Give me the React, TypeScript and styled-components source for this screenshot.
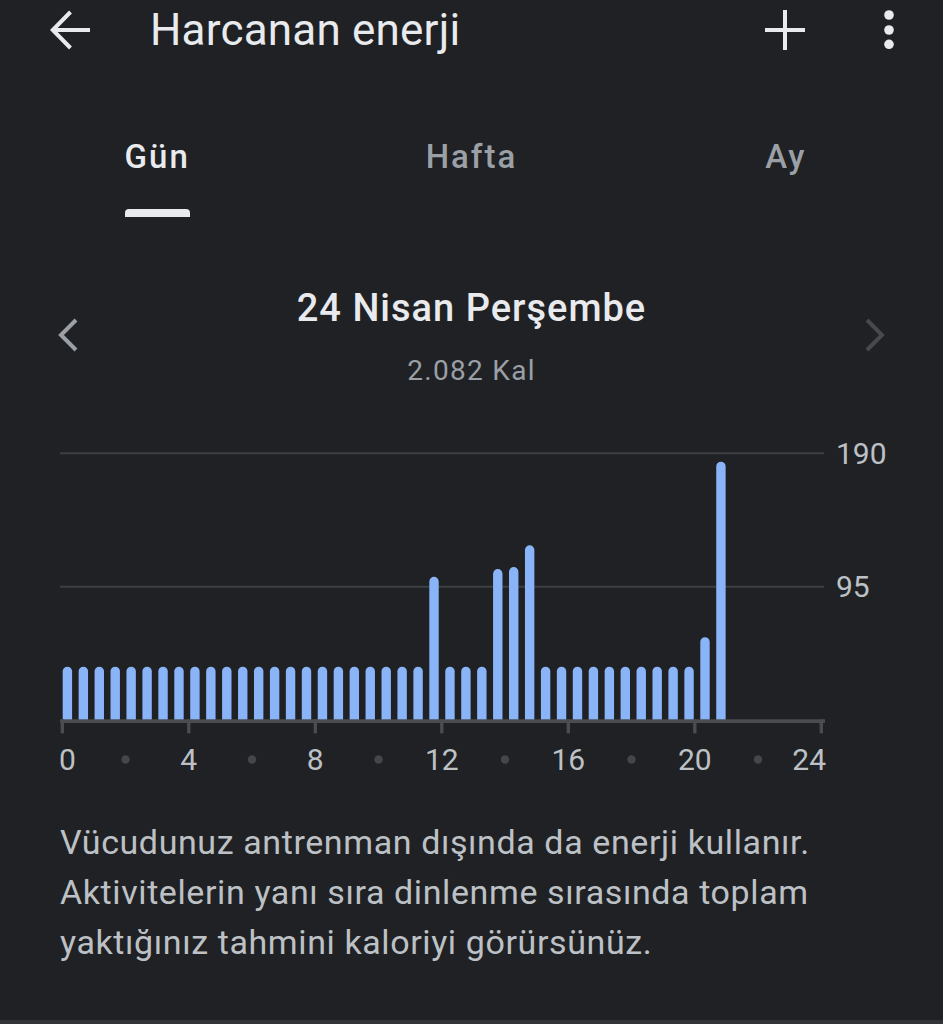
import React from "react";
import styled, { createGlobalStyle } from "styled-components";

const GlobalStyle = createGlobalStyle`
  html, body {
    margin: 0;
    padding: 0;
    background: #202124;
  }
  body {
    font-family: Roboto, "Noto Sans", sans-serif;
  }
`;

const Page = styled.div`
  width: 943px;
  height: 1024px;
  box-sizing: border-box;
  background: #202124;
  border-bottom: 4px solid #323336;
  overflow: hidden;
  display: flex;
  flex-direction: column;
`;

const TopBar = styled.header`
  height: 60px;
  display: flex;
  align-items: center;
  padding: 0 48px 0 50px;
`;

const Title = styled.h1`
  margin: 0 0 0 60px;
  flex: 1;
  font-size: 44px;
  line-height: 60px;
  font-weight: 400;
  letter-spacing: 0.2px;
  color: #e8eaed;
`;

const Actions = styled.div`
  display: flex;
  align-items: center;
  gap: 78px;
`;

const Icon = styled.svg`
  display: block;
  flex-shrink: 0;
`;

const Tabs = styled.nav`
  margin-top: 77px;
  display: grid;
  grid-template-columns: repeat(3, 1fr);
`;

const Tab = styled.div`
  display: flex;
  justify-content: center;
`;

const TabInner = styled.div`
  display: flex;
  flex-direction: column;
  align-items: stretch;
`;

const TabLabel = styled.span<{ $active?: boolean }>`
  font-size: 33px;
  line-height: 40px;
  font-weight: 500;
  letter-spacing: 2px;
  text-align: center;
  color: ${(p) => (p.$active ? "#e8eaed" : "#9aa0a6")};
`;

const Indicator = styled.div<{ $active?: boolean }>`
  margin-top: 32px;
  height: 8px;
  border-radius: 4px 4px 0 0;
  background: ${(p) => (p.$active ? "#e8eaed" : "transparent")};
`;

const DateNav = styled.div`
  margin-top: 69px;
  display: flex;
  align-items: center;
  padding: 0 58px;
`;

const Chevron = styled.svg`
  display: block;
  flex-shrink: 0;
  margin-top: -5px;
`;

const DateCenter = styled.div`
  flex: 1;
  display: flex;
  flex-direction: column;
  align-items: center;
`;

const DateTitle = styled.div`
  font-size: 38px;
  line-height: 44px;
  font-weight: 500;
  letter-spacing: 1px;
  color: #e8eaed;
`;

const Total = styled.div`
  margin-top: 23px;
  font-size: 28px;
  line-height: 36px;
  letter-spacing: 1.3px;
  color: #9aa0a6;
`;

const ChartSvg = styled.svg`
  display: block;
  margin-top: 41px;
  overflow: visible;
`;

const AxisText = styled.text`
  font-family: Roboto, "Noto Sans", sans-serif;
  font-size: 30px;
  fill: #bdc1c6;
`;

const Description = styled.p`
  margin: 37px 0 0;
  padding: 0 60px;
  font-size: 34px;
  line-height: 50px;
  letter-spacing: 0.6px;
  color: #bdc1c6;
`;

const spikes: Record<number, number> = {
  23: 102,
  27: 107.5,
  28: 109,
  29: 124.5,
  40: 59,
  41: 184,
};
const values = Array.from({ length: 42 }, (_, i) => spikes[i] ?? 38);

const BASE = 720;
const PX_PER_UNIT = 266.7 / 190;
const hourX = (h: number) => 62.3 + h * 31.625;

const Bar = ({ i, v }: { i: number; v: number }) => {
  const x = 62.7 + i * 15.94;
  const w = 9.4;
  const r = w / 2;
  const top = BASE - v * PX_PER_UNIT;
  const d = `M${x},${BASE} V${top + r} A${r},${r} 0 0 1 ${x + w},${top + r} V${BASE} Z`;
  return <path d={d} fill="#8ab4f8" />;
};

const Chart = () => (
  <ChartSvg width={943} height={350} viewBox="0 430 943 350">
    <line x1={60} x2={824} y1={453.3} y2={453.3} stroke="#3c4043" strokeWidth={2} />
    <line x1={60} x2={824} y1={586.7} y2={586.7} stroke="#3c4043" strokeWidth={2} />
    <AxisText x={836} y={464}>190</AxisText>
    <AxisText x={836} y={597}>95</AxisText>
    {values.map((v, i) => (
      <Bar key={i} i={i} v={v} />
    ))}
    <rect x={60} y={719.3} width={765} height={3.7} fill="#4a4c50" />
    {[0, 4, 8, 12, 16, 20, 24].map((h) => (
      <rect key={h} x={hourX(h) - 1.7} y={719.3} width={3.4} height={14} fill="#4a4c50" />
    ))}
    {[2, 6, 10, 14, 18, 22].map((h) => (
      <circle key={h} cx={hourX(h)} cy={759.5} r={4.2} fill="#44464a" />
    ))}
    {[0, 4, 8, 12, 16, 20, 24].map((h) => (
      <AxisText
        key={h}
        x={h === 0 ? 59 : h === 24 ? 826 : hourX(h)}
        y={770}
        textAnchor={h === 0 ? "start" : h === 24 ? "end" : "middle"}
      >
        {h}
      </AxisText>
    ))}
  </ChartSvg>
);

const tabs = ["Gün", "Hafta", "Ay"];

export default function App() {
  return (
    <>
      <GlobalStyle />
      <Page>
        <TopBar>
          <Icon width={40} height={40} viewBox="0 0 40 40">
            <path d="M2 20 H40 M20.5 2 L2.8 20 L20.5 38" fill="none" stroke="#e8eaed" strokeWidth={4} />
          </Icon>
          <Title>Harcanan enerji</Title>
          <Actions>
            <Icon width={40} height={40} viewBox="0 0 40 40">
              <path d="M20 0 V40 M0 20 H40" stroke="#e8eaed" strokeWidth={4} />
            </Icon>
            <Icon width={12} height={40} viewBox="0 0 12 40">
              <circle cx={6} cy={5} r={4.8} fill="#e8eaed" />
              <circle cx={6} cy={20} r={4.8} fill="#e8eaed" />
              <circle cx={6} cy={34.3} r={4.8} fill="#e8eaed" />
            </Icon>
          </Actions>
        </TopBar>

        <Tabs>
          {tabs.map((t, i) => (
            <Tab key={t}>
              <TabInner>
                <TabLabel $active={i === 0}>{t}</TabLabel>
                <Indicator $active={i === 0} />
              </TabInner>
            </Tab>
          ))}
        </Tabs>

        <DateNav>
          <Chevron width={20} height={34} viewBox="0 0 20 34">
            <polyline points="18,2 3,17 18,32" fill="none" stroke="#9aa0a6" strokeWidth={4} />
          </Chevron>
          <DateCenter>
            <DateTitle>24 Nisan Perşembe</DateTitle>
            <Total>2.082 Kal</Total>
          </DateCenter>
          <Chevron width={20} height={34} viewBox="0 0 20 34">
            <polyline points="2,2 17,17 2,32" fill="none" stroke="#47494d" strokeWidth={4} />
          </Chevron>
        </DateNav>

        <Chart />

        <Description>
          Vücudunuz antrenman dışında da enerji kullanır. Aktivitelerin yanı sıra dinlenme sırasında
          toplam yaktığınız tahmini kaloriyi görürsünüz.
        </Description>
      </Page>
    </>
  );
}
